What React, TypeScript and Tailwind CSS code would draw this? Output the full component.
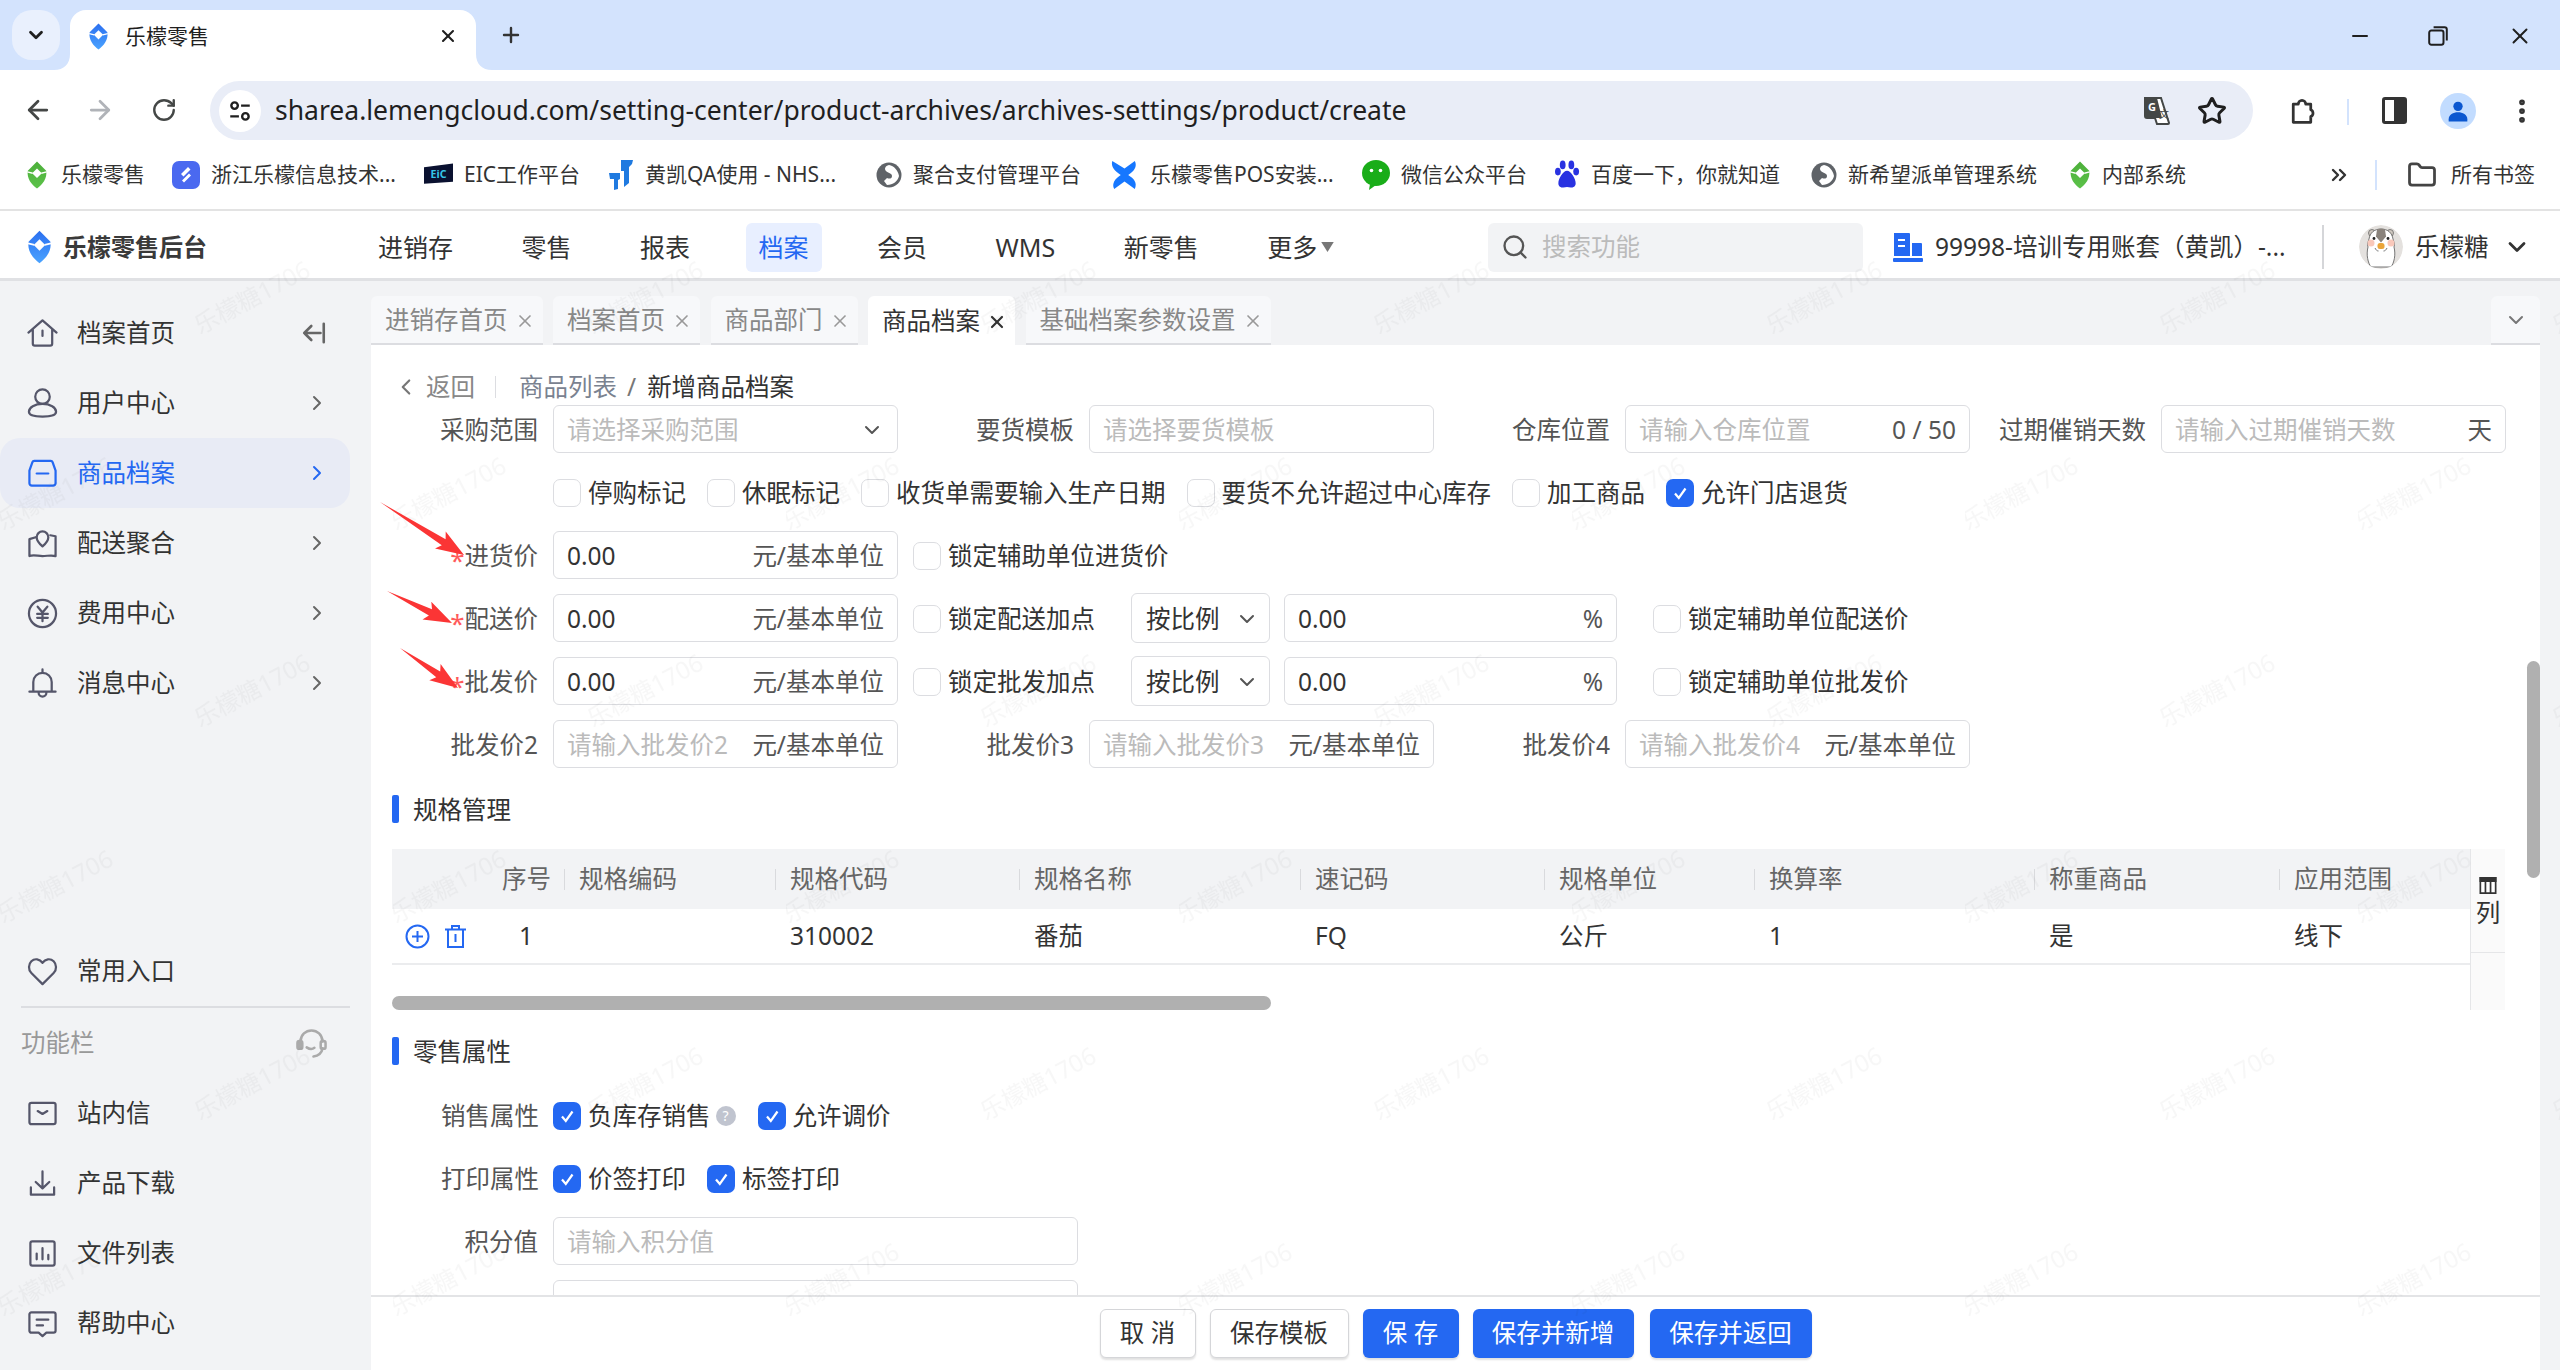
import type { ReactNode } from 'react'
import { ArrowLeft, ArrowRight, RotateCw, Star, EllipsisVertical, Minus, X, Plus, ChevronDown, ChevronRight, ChevronLeft, Folder, ChevronsRight, Search } from 'lucide-react'

// leaf-shaped brand mark, used in blue and green
function Leaf({ from, to, className }: { from: string; to: string; className: string }) {
  const id = `leaf${from.slice(1)}`
  return (
    <svg viewBox="0 0 24 32" className={className}>
      <defs>
        <linearGradient id={id} x1="0" y1="0" x2="0" y2="1">
          <stop offset="0" stopColor={from} />
          <stop offset="1" stopColor={to} />
        </linearGradient>
      </defs>
      <path fillRule="evenodd" fill={`url(#${id})`} d="M12 0.5 22.5 11C24 20 18 27 12 31.5 6 27 0 20 1.5 11ZM12 8.5 6.5 14 12 19.5 17.5 14Z" />
      <path d="M1 12.5 7 14M23 12.5 17 14" stroke="#fff" strokeWidth="1.6" />
    </svg>
  )
}

function Globe() {
  return (
    <svg viewBox="0 0 26 26" className="w-[26px] h-[26px]">
      <circle cx="13" cy="13" r="12.5" fill="#5f6368" />
      <path d="M13 3c-4 1-5 4-3 6s6 2 6 5-3 3-5 2l-3 3 3 4c6 0 11-4 12-9-1-6-5-10-10-11z" fill="#fff" />
    </svg>
  )
}

const BOOKMARKS: { text: string; w: string; icon: ReactNode }[] = [
  { text: '乐檬零售', w: 'w-[148px]', icon: <Leaf from="#4caf3a" to="#5cc24a" className="w-[22px] h-[28px] mx-[2px]" /> },
  { text: '浙江乐檬信息技术...', w: 'w-[252px]', icon: (
    <svg viewBox="0 0 28 28" className="w-[28px] h-[28px]"><rect width="28" height="28" rx="7" fill="#4a69f0" /><path d="M16 6 9 13l2.500 2.500 7-7zM17 12.500 10 19.500l2 2 7-7z" fill="#fff" /></svg>
  ) },
  { text: 'EIC工作平台', w: 'w-[184px]', icon: (
    <svg viewBox="0 0 30 26" className="w-[29px] h-[26px]"><path d="M0 5 30 1v19L0 22z" fill="#0a1130" /><text x="15" y="16.500" textAnchor="middle" fontSize="11" fontWeight="700" fill="#35c6e8">EiC</text></svg>
  ) },
  { text: '黄凯QA使用 - NHS...', w: 'w-[268px]', icon: (
    <svg viewBox="0 0 26 30" className="w-[26px] h-[30px]"><path d="M13 0h12l-1 4-3 3v16l-5 4v-16h-3zM1 13h11v6l-2 1v9l-4 1V19H2z" fill="#1f7ae0" /></svg>
  ) },
  { text: '聚合支付管理平台', w: 'w-[234px]', icon: <Globe /> },
  { text: '乐檬零售POS安装...', w: 'w-[252px]', icon: (
    <svg viewBox="0 0 30 32" className="w-[29px] h-[30px]"><path d="M2 1 15 9 26 1c3 6-1 11-7 15 6 4 10 8 7 15L15 23 4 31C1 25 5 20 11 16 5 12 0 7 2 1z" fill="#1677ff" /></svg>
  ) },
  { text: '微信公众平台', w: 'w-[193px]', icon: (
    <svg viewBox="0 0 28 30" className="w-[28px] h-[30px]"><ellipse cx="14" cy="13" rx="14" ry="13" fill="#1aad19" /><path d="M8 24l-1 6 7-5z" fill="#1aad19" /><circle cx="9.500" cy="10.500" r="1.800" fill="#fff" /><circle cx="18.500" cy="10.500" r="1.800" fill="#fff" /></svg>
  ) },
  { text: '百度一下，你就知道', w: 'w-[256px]', icon: (
    <svg viewBox="0 0 26 30" className="w-[25px] h-[29px]" fill="#2932e1"><ellipse cx="8" cy="5" rx="3" ry="4.500" /><ellipse cx="17" cy="5" rx="3" ry="4.500" /><ellipse cx="3" cy="12" rx="3" ry="4" /><ellipse cx="22" cy="12" rx="3" ry="4" /><path d="M12.500 11c4 0 9 8 9 13 0 5-5 5-9 4-4 1-9 1-9-4 0-5 5-13 9-13z" /></svg>
  ) },
  { text: '新希望派单管理系统', w: 'w-[258px]', icon: <Globe /> },
  { text: '内部系统', w: 'w-[119px]', icon: <Leaf from="#4caf3a" to="#5cc24a" className="w-[22px] h-[28px]" /> },
]

const NAV = ['进销存', '零售', '报表', '档案', '会员', 'WMS', '新零售']

type IconProps = { className?: string }
const S = ({ children, className }: { children: ReactNode; className?: string }) => (
  <svg viewBox="0 0 32 32" fill="none" stroke="currentColor" strokeWidth="2.300" strokeLinecap="round" strokeLinejoin="round" className={className}>{children}</svg>
)
const IHome = (p: IconProps) => <S {...p}><path d="M1.500 15 16 2.500 30.500 15M6 11.500V26.500a2 2 0 0 0 2 2h16a2 2 0 0 0 2-2V11.500M16 13v5.500" /></S>
const IUser = (p: IconProps) => <S {...p}><circle cx="16" cy="9" r="7.500" /><path d="M16 16.500c-8 0-14 3.500-14 8 0 3 5 5 14 5s14-2 14-5c0-4.500-6-8-14-8z" /></S>
const IBox = (p: IconProps) => <S {...p}><path d="M7.500 3h17a2 2 0 0 1 1.900 1.300L29.500 13v13a2.500 2.500 0 0 1-2.500 2.500H5A2.500 2.500 0 0 1 2.500 26V13l3.100-8.700A2 2 0 0 1 7.500 3zM10 16h12" /></S>
const IMap = (p: IconProps) => <S {...p}><path d="M9 9.500 2.500 11.500V29c4-2 8.500 0 13.500 0s9-1.500 13.500 0V8.500L24 7.500M16 19c-4-3.500-6-6.500-6-9.500a6 6 0 0 1 12 0c0 3-2 6-6 9.500z" /></S>
const IYen = (p: IconProps) => <S {...p}><circle cx="16" cy="16" r="14" /><path d="M11 9l5 6 5-6M10.500 16.500h11M10.500 20.500h11M16 15v9" /></S>
const IBell = (p: IconProps) => <S {...p}><path d="M16 1.500V5M6.500 24V14.500a9.500 9.500 0 0 1 19 0V24M2.500 24.500h27M12 25.500a4 4 0 0 0 8 0" /></S>
const IHeart = (p: IconProps) => <S {...p}><path d="M16 29 4.500 17.500C1 14 1.500 8.500 4.500 5.500c3.500-3.500 8.500-2.500 11.500 1.500 3-4 8-5 11.500-1.500 3 3 3.500 8.500 0 12z" /></S>
const IMail = (p: IconProps) => <S {...p}><rect x="2.500" y="5" width="27" height="22" rx="2" /><path d="M11 13.500l5 3 5-3" /></S>
const IDownload = (p: IconProps) => <S {...p}><path d="M16 3.500v17M9 14.500l7 6.500 7-6.500M4 20v7.500h24V20" /></S>
const IChart = (p: IconProps) => <S {...p}><rect x="3.500" y="3.500" width="25" height="25" rx="2" /><path d="M10 22v-6M16 22V10.500M22 22v-4.500" /></S>
const IHelp = (p: IconProps) => <S {...p}><path d="M4.500 4.500h23a2 2 0 0 1 2 2v17a2 2 0 0 1-2 2h-7.500L16 29l-4-3.500H4.500a2 2 0 0 1-2-2v-17a2 2 0 0 1 2-2zM10 12h12M10 18h6.500" /></S>

const MENU = [
  { label: '档案首页', icon: IHome },
  { label: '用户中心', icon: IUser, arrow: true },
  { label: '商品档案', icon: IBox, arrow: true, active: true },
  { label: '配送聚合', icon: IMap, arrow: true },
  { label: '费用中心', icon: IYen, arrow: true },
  { label: '消息中心', icon: IBell, arrow: true },
]
const TOOLS = [
  { label: '站内信', icon: IMail },
  { label: '产品下载', icon: IDownload },
  { label: '文件列表', icon: IChart },
  { label: '帮助中心', icon: IHelp },
]

function MenuItem({ label, icon: Icon, arrow, active, extra }: { label: string; icon: (p: IconProps) => ReactNode; arrow?: boolean; active?: boolean; extra?: ReactNode }) {
  return (
    <div className={`w-[350px] h-[70px] shrink-0 pl-[27px] pr-[21px] flex items-center rounded-[20px] ${active ? 'bg-[#e8ebf5] text-[#2468f2]' : 'text-[#333]'}`}>
      <Icon className={`w-[31px] h-[31px] shrink-0 ${active ? '' : 'text-[#55566a]'}`} />
      <span className="ml-[19px] flex-1">{label}</span>
      {arrow && <ChevronRight strokeWidth={2} className={`w-[24px] h-[24px] ${active ? 'text-[#2468f2]' : 'text-[#666]'}`} />}
      {extra}
    </div>
  )
}

function Sidebar() {
  return (
    <aside className="w-[371px] shrink-0 bg-[#f2f3f5] flex flex-col justify-between pt-[17px] pb-[12px]">
      <div className="flex flex-col">
        {MENU.map((m) => (
          <MenuItem key={m.label} {...m} extra={m.label === '档案首页' ? (
            <svg viewBox="0 0 24 24" fill="none" stroke="#666" strokeWidth="2.400" strokeLinecap="round" strokeLinejoin="round" className="w-[26px] h-[26px] mr-[2px]"><path d="M21 3.500v17M18 12H3M9.500 5.500 3 12l6.500 6.500" /></svg>
          ) : undefined} />
        ))}
      </div>
      <div className="flex flex-col">
        <MenuItem label="常用入口" icon={IHeart} />
        <div className="ml-[21px] w-[329px] h-[2px] bg-[#dcdde1]" />
        <div className="h-[70px] w-[350px] pl-[21px] pr-[23px] flex items-center justify-between text-[#999]">
          <span>功能栏</span>
          <svg viewBox="0 0 32 32" fill="none" stroke="#aaa" strokeWidth="2.600" strokeLinecap="round" className="w-[31px] h-[31px]">
            <path d="M4.500 14C5 7 10 2.500 16 2.500S27 7 27.500 14M27.500 21c-1 5-5 8-9.500 8.500M11 20c3 2 6 2 8 .5" />
            <rect x="1.500" y="13.500" width="5" height="8" rx="2" fill="#aaa" />
            <rect x="25.500" y="13.500" width="5" height="8" rx="2" />
          </svg>
        </div>
        {TOOLS.map((t) => <MenuItem key={t.label} {...t} />)}
      </div>
    </aside>
  )
}

function TopChrome() {
  return (
    <>
      <div className="h-[70px] bg-[#d3e3fd] flex items-start shrink-0 text-[#1f1f1f]">
        <div className="mt-[10px] ml-[12px] w-[48px] h-[50px] rounded-[20px] bg-[#e9f0fd] flex items-center justify-center">
          <ChevronDown strokeWidth={3} className="w-[22px] h-[22px]" />
        </div>
        <div className="relative mt-[10px] ml-[10px] w-[406px] h-[60px] bg-white rounded-t-[16px] flex items-center pl-[18px] pr-[18px] pb-[8px]">
          <svg viewBox="0 0 16 16" className="absolute -left-[16px] bottom-0 w-[16px] h-[16px]"><path d="M16 0v16H0C10 16 16 10 16 0z" fill="#fff" /></svg>
          <svg viewBox="0 0 16 16" className="absolute -right-[16px] bottom-0 w-[16px] h-[16px]"><path d="M0 0v16h16C6 16 0 10 0 0z" fill="#fff" /></svg>
          <Leaf from="#2b6ff0" to="#4aa3ff" className="w-[21px] h-[27px]" />
          <span className="ml-[16px] text-[21px] flex-1">乐檬零售</span>
          <X strokeWidth={2.500} className="w-[20px] h-[20px]" />
        </div>
        <Plus strokeWidth={2.400} className="mt-[23px] ml-[23px] w-[24px] h-[24px] text-[#333]" />
        <div className="ml-auto mt-[23px] flex items-center text-[#1f1f1f]">
          <Minus strokeWidth={2} className="w-[24px] h-[24px] mr-[55px]" />
          <svg viewBox="0 0 20 20" fill="none" stroke="currentColor" strokeWidth="1.800" className="w-[22px] h-[22px] mr-[58px]"><rect x="2" y="5" width="13" height="13" rx="2" /><path d="M6 2h10a2 2 0 0 1 2 2v10" /></svg>
          <X strokeWidth={1.800} className="w-[26px] h-[26px] mr-[27px]" />
        </div>
      </div>
      <div className="h-[70px] bg-white flex items-start shrink-0 text-[#444746] rounded-tl-[16px] rounded-tr-[16px] relative z-10">
        <ArrowLeft strokeWidth={2.200} className="mt-[25px] ml-[23px] w-[30px] h-[30px]" />
        <ArrowRight strokeWidth={2.200} className="mt-[25px] ml-[32px] w-[30px] h-[30px] text-[#b0b3b8]" />
        <RotateCw strokeWidth={2.200} className="mt-[27px] ml-[36px] w-[26px] h-[26px]" />
        <div className="mt-[11px] ml-[33px] w-[2043px] h-[59px] bg-[#e9edf7] rounded-full flex items-center pl-[9px] pr-[26px]">
          <div className="w-[42px] h-[42px] bg-white rounded-full flex items-center justify-center">
            <svg viewBox="0 0 24 24" fill="none" stroke="#1f1f1f" strokeWidth="2.200" className="w-[26px] h-[26px]"><circle cx="7" cy="7" r="3" /><path d="M13 7h8M3 17h8" /><circle cx="17" cy="17" r="3" /></svg>
          </div>
          <span className="ml-[14px] text-[#1f1f1f] text-[26.500px] flex-1 whitespace-nowrap">sharea.lemengcloud.com/setting-center/product-archives/archives-settings/product/create</span>
          <svg viewBox="0 0 30 30" className="w-[30px] h-[30px] mr-[24px] ml-[1px]">
            <path d="M2 2h16l8 25a1 1 0 0 1-1 1H14l-2-6H4a2 2 0 0 1-2-2z" fill="#fff" stroke="#444746" strokeWidth="2" />
            <path d="M2 2h12l5 20H4a2 2 0 0 1-2-2z" fill="#444746" />
            <text x="9" y="15" textAnchor="middle" fontSize="11" fontWeight="700" fill="#fff">G</text>
            <text x="21" y="22" textAnchor="middle" fontSize="10" fill="#444746">文</text>
          </svg>
          <Star strokeWidth={2.400} className="w-[30px] h-[30px] text-[#1f1f1f]" />
        </div>
        <svg viewBox="0 0 24 24" fill="none" stroke="#333" strokeWidth="2.200" strokeLinejoin="round" className="mt-[26px] ml-[34px] w-[30px] h-[30px]">
          <path d="M5 6.500h4a3 3 0 0 1 6 0h4v4.500a3 3 0 0 1 0 5.500v4.500H5z" />
        </svg>
        <div className="mt-[29px] ml-[30px] w-[2px] h-[26px] bg-[#d3e3fd]" />
        <div className="mt-[27px] ml-[33px] w-[25px] h-[27px] border-[3px] border-[#333] rounded-[3px] flex justify-end"><div className="w-[10px] bg-[#333]" /></div>
        <div className="mt-[23px] ml-[33px] w-[36px] h-[36px] rounded-full bg-[#c2dcff] flex items-center justify-center">
          <svg viewBox="0 0 24 24" fill="#0b57d0" className="w-[28px] h-[28px]"><circle cx="12" cy="8" r="4" /><path d="M4 21v-2c0-4 4-6 8-6s8 2 8 6v2z" /></svg>
        </div>
        <EllipsisVertical strokeWidth={2.600} className="mt-[26px] ml-[31px] w-[30px] h-[30px] text-[#333]" />
      </div>
      <div className="h-[71px] bg-white border-b-[2px] border-[#e3e3e3] flex items-center pl-[24px] shrink-0 relative z-10">
        {BOOKMARKS.map((b) => (
          <div key={b.text} className={`flex items-center gap-[11px] text-[21px] text-[#333] whitespace-nowrap shrink-0 ${b.w}`}>
            <span className="flex items-center shrink-0">{b.icon}</span>
            <span>{b.text}</span>
          </div>
        ))}
        <ChevronsRight strokeWidth={2.400} className="ml-[139px] w-[24px] h-[24px] text-[#333]" />
        <div className="ml-[24px] w-[2px] h-[30px] bg-[#d3e3fd]" />
        <Folder strokeWidth={2.200} className="ml-[30px] w-[30px] h-[30px] text-[#444]" />
        <span className="ml-[14px] text-[21px] text-[#333]">所有书签</span>
      </div>
    </>
  )
}

function AppHeader() {
  return (
    <header className="h-[70px] pt-[5px] bg-white border-b-[3px] border-[#e0e1e4] flex items-center shrink-0 text-[#333]">
      <div className="w-[365px] pl-[27px] flex items-center gap-[11px] shrink-0">
        <Leaf from="#2b6ff0" to="#4aa3ff" className="w-[25px] h-[34px]" />
        <span className="text-[24px] font-bold text-[#3a3a3a]">乐檬零售后台</span>
      </div>
      <nav className="w-[1123px] flex items-center gap-[42.500px] shrink-0 text-[25px]">
        {NAV.map((n) => (
          <span key={n} className={`h-[49px] px-[13px] flex items-center rounded-[6px] ${n === '档案' ? 'bg-[#e8efff] text-[#2468f2]' : ''}`}>{n}</span>
        ))}
        <span className="flex items-center px-[13px] gap-[4px]">更多<svg viewBox="0 0 10 8" className="w-[13px] h-[10px]"><path d="M0 0h10L5 8z" fill="#777" /></svg></span>
      </nav>
      <div className="w-[375px] h-[49px] bg-[#f2f3f5] rounded-[6px] flex items-center pl-[13px] gap-[13px] text-[#bbb] shrink-0">
        <Search strokeWidth={2} className="w-[28px] h-[28px] text-[#555]" />
        搜索功能
      </div>
      <svg viewBox="0 0 30 30" className="ml-[30px] w-[30px] h-[30px] shrink-0" fill="#2468f2"><path d="M1 1h15a1 1 0 0 1 1 1v22H1zM19 11h9a1 1 0 0 1 1 1v12H19z" /><rect y="26" width="30" height="4" rx="1" /><path d="M5 7h7v2H5zM5 13h7v2H5z" fill="#fff" /></svg>
      <span className="ml-[12px] w-[387px] whitespace-nowrap">99998-培训专用账套（黄凯）-...</span>
      <div className="w-[2px] h-[44px] bg-[#d5d6d9]" />
      <svg viewBox="0 0 44 44" className="ml-[35px] w-[44px] h-[44px] shrink-0 rounded-full">
        <circle cx="22" cy="22" r="22" fill="#e4e1de" />
        {/* hamster holding a snack */}
        <circle cx="13" cy="8" r="3.500" fill="#cfc8c0" stroke="#666" strokeWidth="0.800" />
        <circle cx="31" cy="8" r="3.500" fill="#cfc8c0" stroke="#666" strokeWidth="0.800" />
        <path d="M22 4c7 0 11 4 12 10 1 4 2 4 1 8 2 8 0 16-3 20H12C9 38 7 30 9 22c-1-4 0-4 1-8C11 8 15 4 22 4z" fill="#fff" stroke="#666" strokeWidth="0.900" />
        <path d="M18 4.500c2-1 6-1 8 0l1 7-5 6-5-6z" fill="#8a837c" />
        <circle cx="12" cy="18" r="3.500" fill="#f9c8ba" /><circle cx="32" cy="18" r="3.500" fill="#f9c8ba" />
        <circle cx="15" cy="13.500" r="1.400" fill="#222" /><circle cx="29" cy="13.500" r="1.400" fill="#222" />
        <rect x="18.500" y="18" width="7" height="6" rx="2.500" fill="#eaa53a" />
        <path d="M16 23c1 2 2 3 3.500 3M28 23c-1 2-2 3-3.500 3" fill="none" stroke="#666" strokeWidth="0.900" />
      </svg>
      <span className="ml-[12px]">乐檬糖</span>
      <ChevronDown strokeWidth={2.400} className="ml-[14px] w-[28px] h-[28px]" />
    </header>
  )
}

const TABS = [
  { t: '进销存首页' },
  { t: '档案首页' },
  { t: '商品部门' },
  { t: '商品档案', active: true },
  { t: '基础档案参数设置' },
]

function TabBar() {
  return (
    <div className="h-[64px] pt-[15px] flex justify-between shrink-0">
      <div className="flex gap-[10.500px]">
        {TABS.map((x) => (
          <div key={x.t} className={`h-[49px] pt-[2px] pl-[14px] pr-[8px] flex items-center gap-[7px] rounded-t-[6px] ${x.active ? 'bg-white text-[#333]' : 'bg-[#f7f8fa] text-[#888] border-b-[2px] border-[#dcdde1]'}`}>
            {x.t}
            <X strokeWidth={x.active ? 2.600 : 2} className={`w-[20px] h-[20px] ${x.active ? 'text-[#333]' : 'text-[#999]'}`} />
          </div>
        ))}
      </div>
      <div className="w-[49px] h-[49px] bg-[#f7f8fa] border-b-[2px] border-[#dcdde1] rounded-t-[6px] flex items-center justify-center">
        <ChevronDown strokeWidth={2} className="w-[24px] h-[24px] text-[#777]" />
      </div>
    </div>
  )
}

function Check({ label, checked, tip }: { label: string; checked?: boolean; tip?: boolean }) {
  return (
    <div className="pt-[2px] flex items-center gap-[7px] text-[#333] whitespace-nowrap">
      <span className={`w-[28px] h-[28px] rounded-[7px] flex items-center justify-center shrink-0 ${checked ? 'bg-[#2468f2]' : 'bg-white border-[1.500px] border-[#dcdde1]'}`}>
        {checked && <svg viewBox="0 0 20 20" fill="none" stroke="#fff" strokeWidth="2.200" className="w-[20px] h-[20px]"><path d="M5 10.500 8.800 15 15.500 5.500" /></svg>}
      </span>
      {label}
      {tip && <span className="-ml-[2px] w-[20px] h-[20px] rounded-full bg-[#c0c4cf] text-white text-[14px] flex items-center justify-center">?</span>}
    </div>
  )
}

function Box({ text, placeholder, suffix, children, className = 'w-[345px]' }: { text?: string; placeholder?: string; suffix?: string; children?: ReactNode; className?: string }) {
  return (
    <div className={`h-[48px] pt-[2px] shrink-0 rounded-[6px] border-[1.500px] border-[#dcdde1] bg-white flex items-center pl-[13px] pr-[13px] ${className}`}>
      {text && <span className="text-[#333] flex-1">{text}</span>}
      {placeholder && <span className="text-[#bbb] flex-1 whitespace-nowrap">{placeholder}</span>}
      {suffix && <span className="text-[#555] whitespace-nowrap">{suffix}</span>}
      {children}
    </div>
  )
}

function Field({ label, req, children }: { label: string; req?: boolean; children: ReactNode }) {
  return (
    <div className="flex items-center justify-end gap-[15px]">
      <span className="pt-[2px] text-[#555] whitespace-nowrap flex items-center">
        {req && <span className="text-[#ff5a5a] text-[26px] pt-[8px]">*</span>}
        {label}
      </span>
      {children}
    </div>
  )
}

function Select({ label }: { label: string }) {
  return (
    <div className="w-[139px] h-[50px] pt-[2px] shrink-0 rounded-[6px] border-[1.500px] border-[#dcdde1] bg-white flex items-center justify-between pl-[14px] pr-[10px] text-[#333]">
      {label}
      <ChevronDown strokeWidth={2} className="w-[24px] h-[24px] text-[#555]" />
    </div>
  )
}

function SectionTitle({ children }: { children: string }) {
  return (
    <div className="ml-[21px] flex items-center gap-[14px] text-[#333]">
      <span className="w-[7px] h-[28px] bg-[#2468f2] rounded-[2px]" />
      <span className="pt-[2px]">{children}</span>
    </div>
  )
}

const COLS = [
  { w: 'w-[211px]', h: '规格编码', v: '' },
  { w: 'w-[244px]', h: '规格代码', v: '310002' },
  { w: 'w-[281px]', h: '规格名称', v: '番茄' },
  { w: 'w-[244px]', h: '速记码', v: 'FQ' },
  { w: 'w-[210px]', h: '规格单位', v: '公斤' },
  { w: 'w-[280px]', h: '换算率', v: '1' },
  { w: 'w-[245px]', h: '称重商品', v: '是' },
  { w: 'w-[191px]', h: '应用范围', v: '线下' },
]

function SpecTable() {
  return (
    <div className="ml-[21px] w-[2113px] h-[161px] flex shrink-0">
      <div className="w-[2078px] shrink-0 flex flex-col">
        <div className="h-[60px] bg-[#f2f3f5] flex items-center text-[#666] shrink-0">
          <div className="w-[172px] pr-[13px] text-right">序号</div>
          {COLS.map((c) => (
            <div key={c.h} className={`${c.w} flex items-center`}>
              <span className="w-[1px] h-[21px] bg-[#d9dadd] mr-[14px]" />
              {c.h}
            </div>
          ))}
        </div>
        <div className="h-[56px] border-b-[2px] border-[#ebecee] flex items-center text-[#333] shrink-0">
          <div className="w-[172px] pl-[13px] flex items-center gap-[13px]">
            <svg viewBox="0 0 25 25" fill="none" stroke="#2468f2" strokeWidth="2" className="w-[25px] h-[25px]"><circle cx="12.500" cy="12.500" r="11" /><path d="M12.500 7v11M7 12.500h11" /></svg>
            <svg viewBox="0 0 25 25" fill="none" stroke="#2468f2" strokeWidth="2" className="w-[25px] h-[25px]"><path d="M2 5.500h21M9 5.500V2h7v3.500M5 5.500V23h15V5.500M12.500 10v8" /></svg>
            <span className="ml-[38px]">1</span>
          </div>
          {COLS.map((c) => <div key={c.h} className={`${c.w} pl-[15px]`}>{c.v}</div>)}
        </div>
        <div className="mt-auto w-[879px] h-[14px] rounded-full bg-[#b0b0b0] shrink-0" />
      </div>
      <div className="w-[35px] shrink-0 bg-[#fafafa] border-l border-[#e5e6e8] flex flex-col items-center text-[#333]">
        <div className="h-[104px] w-full border-b border-[#e5e6e8] pt-[28px] flex flex-col items-center">
          <svg viewBox="0 0 20 20" className="w-[20px] h-[17px]"><path d="M1 1h18v18H1z" fill="#fff" stroke="#333" strokeWidth="2" /><path d="M1 1h18v4H1zM7 5v14M13 5v14" fill="#333" stroke="#333" strokeWidth="2" /></svg>
          <span className="leading-[30px] mt-[4px]">列</span>
        </div>
      </div>
    </div>
  )
}

function Form() {
  return (
    <div className="flex-1 min-h-0 overflow-hidden relative">
      <div className="h-[60px] pt-[24px] flex items-center pl-[22px] text-[#888]">
        <ChevronLeft strokeWidth={2} className="w-[26px] h-[26px] text-[#777]" />
        <span className="ml-[7px]">返回</span>
        <span className="ml-[20px] w-[1px] h-[22px] bg-[#dcdde1]" />
        <span className="ml-[23px] text-[#7a8290]">商品列表</span>
        <span className="ml-[10px] text-[#777]">/</span>
        <span className="ml-[11px] text-[#333]">新增商品档案</span>
      </div>
      <div className="flex flex-col gap-[15px]">
        <div className="grid grid-cols-[527px_536px_536px_536px]">
          <Field label="采购范围">
            <Box placeholder="请选择采购范围"><ChevronDown strokeWidth={2} className="w-[24px] h-[24px] text-[#555]" /></Box>
          </Field>
          <Field label="要货模板"><Box placeholder="请选择要货模板" /></Field>
          <Field label="仓库位置"><Box placeholder="请输入仓库位置" suffix="0 / 50" className="w-[345px]" /></Field>
          <Field label="过期催销天数"><Box placeholder="请输入过期催销天数" suffix="天" /></Field>
        </div>
        <div className="h-[48px] pl-[182px] flex items-center gap-[21px]">
          <Check label="停购标记" />
          <Check label="休眠标记" />
          <Check label="收货单需要输入生产日期" />
          <Check label="要货不允许超过中心库存" />
          <Check label="加工商品" />
          <Check label="允许门店退货" checked />
        </div>
        <div className="h-[48px] flex items-center">
          <div className="w-[527px]"><Field label="进货价" req><Box text="0.00" suffix="元/基本单位" /></Field></div>
          <div className="ml-[15px]"><Check label="锁定辅助单位进货价" /></div>
        </div>
        {[['配送价', '锁定配送加点', '锁定辅助单位配送价'], ['批发价', '锁定批发加点', '锁定辅助单位批发价']].map(([l, a, b]) => (
          <div key={l} className="h-[48px] flex items-center">
            <div className="w-[527px]"><Field label={l} req><Box text="0.00" suffix="元/基本单位" /></Field></div>
            <div className="ml-[15px] w-[218px]"><Check label={a} /></div>
            <Select label="按比例" />
            <Box text="0.00" suffix="%" className="ml-[14px] w-[333px]" />
            <div className="ml-[36px]"><Check label={b} /></div>
          </div>
        ))}
        <div className="grid grid-cols-[527px_536px_536px]">
          <Field label="批发价2"><Box placeholder="请输入批发价2" suffix="元/基本单位" /></Field>
          <Field label="批发价3"><Box placeholder="请输入批发价3" suffix="元/基本单位" /></Field>
          <Field label="批发价4"><Box placeholder="请输入批发价4" suffix="元/基本单位" /></Field>
        </div>
      </div>
      <div className="mt-[27px]"><SectionTitle>规格管理</SectionTitle></div>
      <div className="mt-[26px]"><SpecTable /></div>
      <div className="mt-[27px]"><SectionTitle>零售属性</SectionTitle></div>
      <div className="mt-[26px] flex flex-col gap-[15px]">
        <div className="h-[48px] flex items-center gap-[14px]">
          <span className="w-[168px] pt-[2px] text-right text-[#555]">销售属性</span>
          <div className="flex items-center gap-[22px]"><Check label="负库存销售" checked tip /><Check label="允许调价" checked /></div>
        </div>
        <div className="h-[48px] flex items-center gap-[14px]">
          <span className="w-[168px] pt-[2px] text-right text-[#555]">打印属性</span>
          <div className="flex items-center gap-[21px]"><Check label="价签打印" checked /><Check label="标签打印" checked /></div>
        </div>
        <div className="h-[48px] flex items-center gap-[15px]">
          <span className="w-[167px] pt-[2px] text-right text-[#555]">积分值</span>
          <Box placeholder="请输入积分值" className="w-[525px]" />
        </div>
        <div className="h-[48px] pl-[182px]">
          <Box className="w-[525px]" />
        </div>
      </div>
      {/* vertical page scrollbar */}
      <div className="absolute right-0 top-[316px] w-[13px] h-[217px] rounded-b-full rounded-t-full bg-[#b0b0b0]" />
    </div>
  )
}

function Footer() {
  const base = 'h-[49px] rounded-[6px] flex items-center justify-center shadow-[0_2px_2px_rgba(0,0,0,0.12)]'
  const plain = `${base} bg-white border-[1.500px] border-[#d5d6d9] text-[#333]`
  const main = `${base} bg-[#2468f2] text-white`
  return (
    <div className="h-[75px] shrink-0 border-t-[2px] border-[#e3e4e6] bg-white flex items-center justify-center gap-[14px]">
      <button className={`${plain} w-[96px]`}>取 消</button>
      <button className={`${plain} w-[139px]`}>保存模板</button>
      <button className={`${main} w-[96px]`}>保 存</button>
      <button className={`${main} w-[161px]`}>保存并新增</button>
      <button className={`${main} w-[162px] ml-[2px]`}>保存并返回</button>
    </div>
  )
}

// red hand-drawn annotation arrow, tail to tip in page coordinates
function arrow(tx: number, ty: number, px: number, py: number) {
  const len = Math.hypot(px - tx, py - ty)
  const ux = (px - tx) / len
  const uy = (py - ty) / len
  const at = (along: number, side: number) => `${(px - ux * along - uy * side).toFixed(1)},${(py - uy * along + ux * side).toFixed(1)}`
  return [`${tx},${ty}`, at(24, -3.500), at(28, -10), `${px},${py}`, at(28, 10), at(24, 3.500)].join(' ')
}

function Overlays() {
  return (
    <svg viewBox="0 211 2560 1159" className="absolute left-0 top-[211px] w-[2560px] h-[1159px] pointer-events-none z-20">
      <defs>
        <pattern id="wm" patternUnits="userSpaceOnUse" width="393" height="393">
          <text x="256" y="305" textAnchor="middle" fontSize="24" fill="#000" fillOpacity="0.03" transform="rotate(-28 256 305)">乐檬糖1706</text>
          <text x="59" y="108" textAnchor="middle" fontSize="24" fill="#000" fillOpacity="0.03" transform="rotate(-28 59 108)">乐檬糖1706</text>
        </pattern>
      </defs>
      <rect x="0" y="211" width="2560" height="1159" fill="url(#wm)" />
      <polygon points={arrow(380, 502, 464, 555)} fill="#fb3535" />
      <polygon points={arrow(387, 591, 452, 623)} fill="#fb3535" />
      <polygon points={arrow(400, 648, 458, 688)} fill="#fb3535" />
    </svg>
  )
}

export default function App() {
  return (
    <div className="relative w-[2560px] h-[1370px] overflow-hidden flex flex-col bg-white text-[24.500px] leading-none font-['Noto_Sans','Noto_Sans_CJK_SC',sans-serif]">
      <TopChrome />
      <AppHeader />
      <div className="flex flex-1 min-h-0 bg-[#f2f3f5]">
        <Sidebar />
        <main className="flex-1 min-w-0 pr-[20px] flex flex-col">
          <TabBar />
          <div className="flex-1 min-h-0 bg-white flex flex-col">
            <Form />
            <Footer />
          </div>
        </main>
      </div>
      <Overlays />
    </div>
  )
}
